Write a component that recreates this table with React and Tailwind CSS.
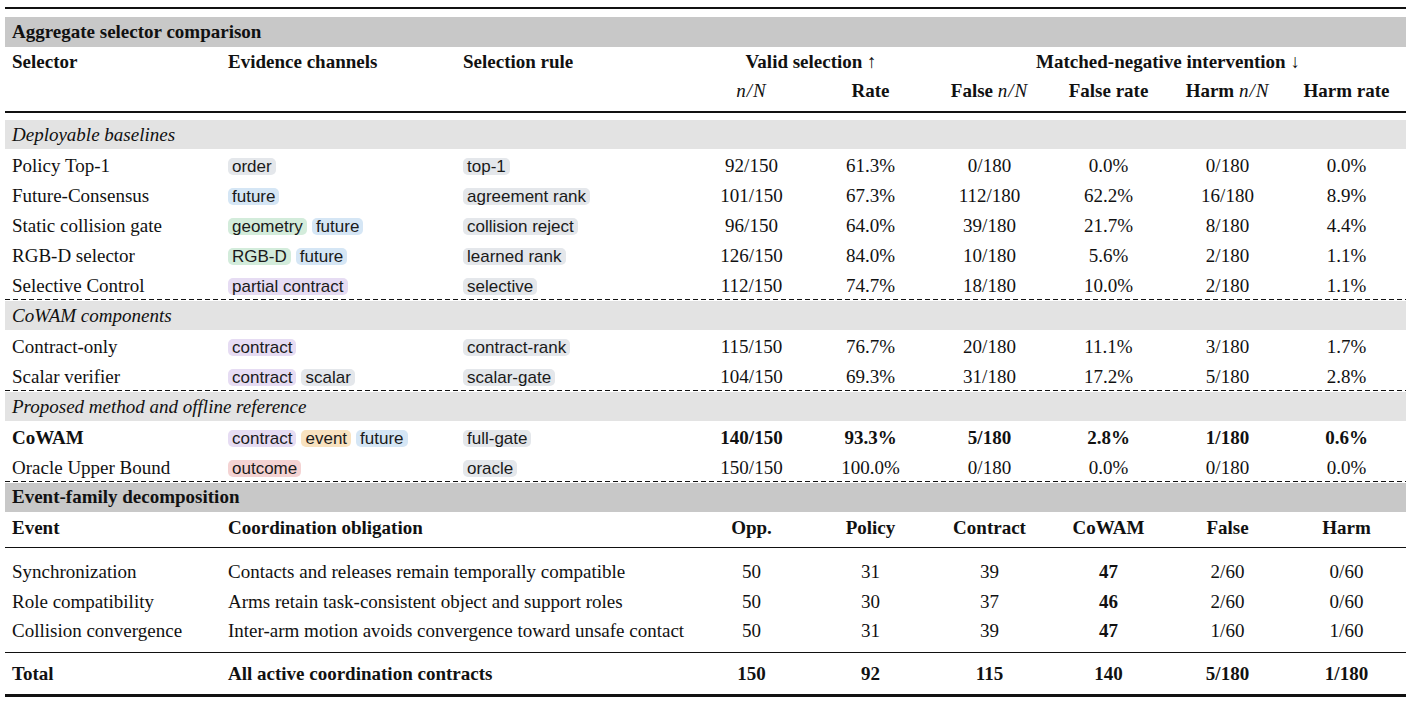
import React from "react";

const GRID = "grid grid-cols-[216px_235px_236px_repeat(6,119px)] items-center";

const TAG = {
  gray: "bg-[#e4e7eb]",
  blue: "bg-[#d5e6f5]",
  green: "bg-[#d3ecdb]",
  purple: "bg-[#e6dcf3]",
  orange: "bg-[#f8e2c0]",
  red: "bg-[#f4d3d3]",
};

const Tag = ({ label, tone = "gray" }) => (
  <span
    className={`${TAG[tone]} inline-block rounded-[5px] px-[4px] h-[17px] leading-[17px] text-[17px] text-[#1a1a1a] font-['Liberation_Sans',Arial,sans-serif]`}
  >
    {label}
  </span>
);

const NN = () => <span className="italic font-normal tracking-[1px]">n/N</span>;

// dashed rule between groups: 1px dash + 1px air
const Dashed = () => (
  <div className="h-[2px] pb-px">
    <div className="h-px bg-[linear-gradient(to_right,#111_5px,transparent_5px)] bg-[length:8px_1px]" />
  </div>
);

const GroupBar = ({ children }) => (
  <div className="h-[29px] pt-[2px] bg-[#e3e3e3] flex items-center px-[7px] italic">{children}</div>
);

const groups = [
  {
    title: "Deployable baselines",
    rows: [
      ["Policy Top-1", [["order", "gray"]], "top-1", "92/150", "61.3%", "0/180", "0.0%", "0/180", "0.0%"],
      ["Future-Consensus", [["future", "blue"]], "agreement rank", "101/150", "67.3%", "112/180", "62.2%", "16/180", "8.9%"],
      ["Static collision gate", [["geometry", "green"], ["future", "blue"]], "collision reject", "96/150", "64.0%", "39/180", "21.7%", "8/180", "4.4%"],
      ["RGB-D selector", [["RGB-D", "green"], ["future", "blue"]], "learned rank", "126/150", "84.0%", "10/180", "5.6%", "2/180", "1.1%"],
      ["Selective Control", [["partial contract", "purple"]], "selective", "112/150", "74.7%", "18/180", "10.0%", "2/180", "1.1%"],
    ],
  },
  {
    title: "CoWAM components",
    rows: [
      ["Contract-only", [["contract", "purple"]], "contract-rank", "115/150", "76.7%", "20/180", "11.1%", "3/180", "1.7%"],
      ["Scalar verifier", [["contract", "purple"], ["scalar", "gray"]], "scalar-gate", "104/150", "69.3%", "31/180", "17.2%", "5/180", "2.8%"],
    ],
  },
  {
    title: "Proposed method and offline reference",
    rows: [
      ["CoWAM", [["contract", "purple"], ["event", "orange"], ["future", "blue"]], "full-gate", "140/150", "93.3%", "5/180", "2.8%", "1/180", "0.6%", true],
      ["Oracle Upper Bound", [["outcome", "red"]], "oracle", "150/150", "100.0%", "0/180", "0.0%", "0/180", "0.0%"],
    ],
  },
];

const events = [
  ["Synchronization", "Contacts and releases remain temporally compatible", "50", "31", "39", "47", "2/60", "0/60"],
  ["Role compatibility", "Arms retain task-consistent object and support roles", "50", "30", "37", "46", "2/60", "0/60"],
  ["Collision convergence", "Inter-arm motion avoids convergence toward unsafe contact", "50", "31", "39", "47", "1/60", "1/60"],
];

const SelectorRow = ({ row }) => {
  const [name, tags, rule, ...rest] = row;
  const bold = rest[6] === true;
  const nums = rest.slice(0, 6);
  return (
    <div className={`${GRID} h-[30px] pt-[3px]`}>
      <div className={`px-[7px] ${bold ? "font-bold" : ""}`}>{name}</div>
      <div className="px-[7px] flex gap-[5px]">
        {tags.map(([l, t], i) => (
          <Tag key={i} label={l} tone={t} />
        ))}
      </div>
      <div className="px-[7px] flex">
        <Tag label={rule} />
      </div>
      {nums.map((n, i) => (
        <div key={i} className={`text-center ${bold ? "font-bold" : ""}`}>
          {n}
        </div>
      ))}
    </div>
  );
};

export default function App() {
  return (
    <div className="w-[1412px] h-[706px] bg-white text-[#111] text-[19px] font-['Liberation_Serif','Times_New_Roman',serif] pt-[7px] px-[5px]">
      <div className="w-[1401px]">
        <div className="h-[2px] bg-[#111]" />
        <div className="h-[8px]" />
        <div className="h-[30px] pt-px bg-[#c8c8c8] flex items-center px-[7px] font-bold">
          Aggregate selector comparison
        </div>

        <div className={`${GRID} h-[29px] pt-px font-bold`}>
          <div className="px-[7px]">Selector</div>
          <div className="px-[7px]">Evidence channels</div>
          <div className="px-[7px]">Selection rule</div>
          <div className="col-span-2 text-center">Valid selection ↑</div>
          <div className="col-span-4 text-center">Matched-negative intervention ↓</div>
        </div>
        <div className={`${GRID} h-[30px] pt-px font-bold`}>
          <div />
          <div />
          <div />
          <div className="text-center">
            <NN />
          </div>
          <div className="text-center">Rate</div>
          <div className="text-center">
            False <NN />
          </div>
          <div className="text-center">False rate</div>
          <div className="text-center">
            Harm <NN />
          </div>
          <div className="text-center">Harm rate</div>
        </div>
        <div className="h-[5px]" />
        <div className="h-[2px] bg-[#111]" />
        <div className="h-[7px]" />

        {groups.map((g, gi) => (
          <div key={gi}>
            {gi > 0 && <Dashed />}
            <GroupBar>{g.title}</GroupBar>
            {g.rows.map((r, ri) => (
              <SelectorRow key={ri} row={r} />
            ))}
          </div>
        ))}

        <Dashed />
        <div className="h-[29px] bg-[#c8c8c8] flex items-center px-[7px] font-bold">
          Event-family decomposition
        </div>
        <div className={`${GRID} h-[30px] pt-[2px] font-bold`}>
          <div className="px-[7px]">Event</div>
          <div className="col-span-2 px-[7px]">Coordination obligation</div>
          <div className="text-center">Opp.</div>
          <div className="text-center">Policy</div>
          <div className="text-center">Contract</div>
          <div className="text-center">CoWAM</div>
          <div className="text-center">False</div>
          <div className="text-center">Harm</div>
        </div>
        <div className="h-[5px]" />
        <div className="h-px bg-[#111]" />
        <div className="h-[9px]" />
        {events.map((e, i) => (
          <div key={i} className={`${GRID} h-[29.5px] pt-px`}>
            <div className="px-[7px]">{e[0]}</div>
            <div className="col-span-2 px-[7px] whitespace-nowrap">{e[1]}</div>
            {e.slice(2).map((n, j) => (
              <div key={j} className={`text-center ${j === 3 ? "font-bold" : ""}`}>
                {n}
              </div>
            ))}
          </div>
        ))}
        <div className="h-[6px]" />
        <div className="h-px bg-[#111]" />
        <div className={`${GRID} h-[41px] pt-[3px] font-bold`}>
          <div className="px-[7px]">Total</div>
          <div className="col-span-2 px-[7px]">All active coordination contracts</div>
          <div className="text-center">150</div>
          <div className="text-center">92</div>
          <div className="text-center">115</div>
          <div className="text-center">140</div>
          <div className="text-center">5/180</div>
          <div className="text-center">1/180</div>
        </div>
        <div className="h-[3px] bg-[#111]" />
      </div>
    </div>
  );
}
